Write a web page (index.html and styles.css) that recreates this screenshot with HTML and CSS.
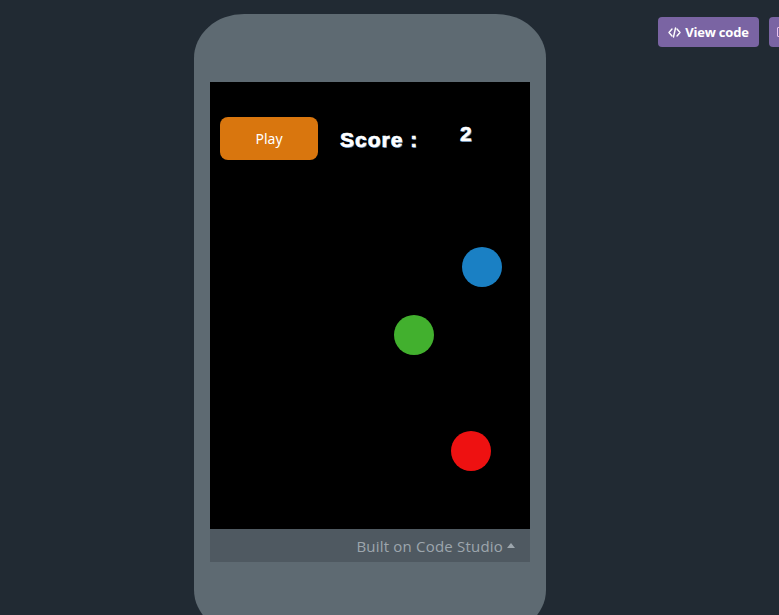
FILE: index.html
```html
<!DOCTYPE html>
<html>
<head>
<meta charset="utf-8">
<link rel="stylesheet" href="styles.css">
</head>
<body>
<div class="page">
  <div class="phone">
    <div class="screen">
      <div class="canvas">
        <button class="play">Play</button>
        <div class="score-label">Score :</div>
        <div class="score-value">2</div>
        <div class="ball ball-blue"></div>
        <div class="ball ball-green"></div>
        <div class="ball ball-red"></div>
      </div>
      <div class="footer">Built on Code Studio <span class="caret"></span></div>
    </div>
  </div>
  <div class="toolbar">
    <button class="tool-btn">
      <svg width="13" height="11" viewBox="0 0 13 11"><path d="M4 2 L1 5.5 L4 9 M9 2 L12 5.5 L9 9 M7.5 1 L5.5 10" fill="none" stroke="#fff" stroke-width="1.4" stroke-linecap="round" stroke-linejoin="round"/></svg>
      View code
    </button>
    <button class="tool-btn tool-btn-cut">
      <span class="mini-icon"></span>
    </button>
  </div>
</div>
</body>
</html>
```
FILE: styles.css
```css
html, body {
  margin: 0;
  padding: 0;
  background: #212a33;
  height: 100%;
  overflow: hidden;
}
.page {
  position: relative;
  padding: 14px 0 0 194px;
}
.phone {
  width: 352px;
  height: 620px;
  box-sizing: border-box;
  background: #5e6a72;
  border-radius: 50px / 44px;
  padding: 68px 16px 0;
}
.screen {
  width: 320px;
  display: flex;
  flex-direction: column;
}
.canvas {
  position: relative;
  height: 447px;
  background: #000;
}
.footer {
  height: 33px;
  background: #4f5961;
  color: #9da6ad;
  font-family: "Open Sans", "Liberation Sans", sans-serif;
  font-size: 15px;
  letter-spacing: 0.2px;
  display: flex;
  align-items: center;
  justify-content: flex-end;
  padding-right: 15px;
  gap: 4px;
  box-sizing: border-box;
}
.caret {
  width: 0;
  height: 0;
  border-left: 4.5px solid transparent;
  border-right: 4.5px solid transparent;
  border-bottom: 5px solid #9da6ad;
  margin-top: -1px;
}
.play {
  position: absolute;
  left: 10px;
  top: 35px;
  width: 98px;
  height: 43px;
  border: none;
  border-radius: 8px;
  background: #d9760e;
  color: #fff;
  font-family: "Noto Sans", "Open Sans", sans-serif;
  font-size: 14px;
  padding: 0;
}
.score-label {
  position: absolute;
  left: 130px;
  top: 46px;
  color: #fff;
  font-family: "Liberation Sans", Arial, sans-serif;
  font-weight: bold;
  font-size: 21px;
  letter-spacing: 1px;
  -webkit-text-stroke: 0.7px #fff;
  text-shadow: 1px 1px 0 #3a6a9a;
}
.score-value {
  position: absolute;
  left: 250px;
  top: 40px;
  color: #fff;
  font-family: "Liberation Sans", Arial, sans-serif;
  font-weight: bold;
  font-size: 21px;
  -webkit-text-stroke: 0.6px #fff;
  text-shadow: 1px 1px 0 #3a6a9a;
}
.ball {
  position: absolute;
  width: 40px;
  height: 40px;
  border-radius: 50%;
}
.ball-blue { left: 252px; top: 165px; background: #1a80c4; }
.ball-green { left: 184px; top: 233px; background: #42b02e; }
.ball-red { left: 241px; top: 349px; background: #ee1111; }
.toolbar {
  position: absolute;
  top: 17px;
  left: 658px;
  display: flex;
  gap: 10px;
}
.tool-btn {
  height: 30px;
  border: none;
  border-radius: 4px;
  background: #7a64a3;
  color: #fff;
  font-family: "Open Sans", "Liberation Sans", sans-serif;
  font-weight: bold;
  font-size: 13px;
  display: flex;
  align-items: center;
  gap: 4px;
  padding: 0 8px;
  width: 101px;
  justify-content: center;
  letter-spacing: -0.2px;
}
.tool-btn-cut {
  width: 40px;
  justify-content: flex-start;
}
.mini-icon {
  width: 9px;
  height: 10px;
  border: 1.5px solid #e8c0f0;
  border-radius: 1px;
  box-sizing: border-box;
}
```
